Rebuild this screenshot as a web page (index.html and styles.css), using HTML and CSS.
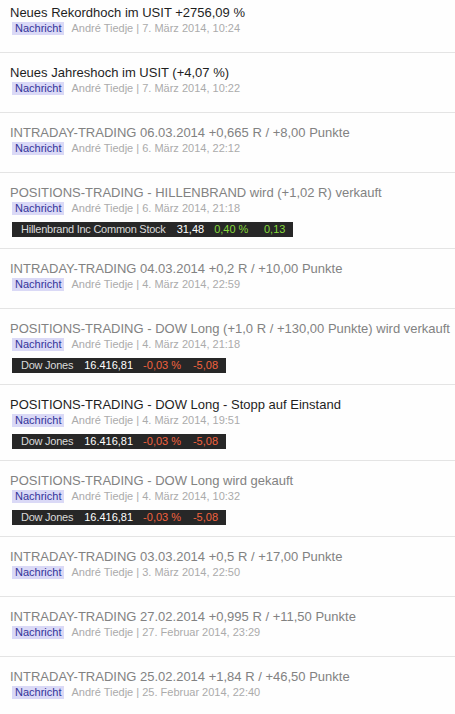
FILE: index.html
```html
<!DOCTYPE html>
<html lang="de">
<head>
<meta charset="utf-8">
<title>Nachrichten</title>
<link rel="stylesheet" href="styles.css">
</head>
<body>
<ul class="news">
  <li class="item first">
    <a class="title dark" href="#">Neues Rekordhoch im USIT +2756,09 %</a>
    <div class="meta"><span class="tag">Nachricht</span><span class="by">André Tiedje | 7. März 2014, 10:24</span></div>
  </li>
  <li class="item">
    <a class="title dark" href="#">Neues Jahreshoch im USIT (+4,07 %)</a>
    <div class="meta"><span class="tag">Nachricht</span><span class="by">André Tiedje | 7. März 2014, 10:22</span></div>
  </li>
  <li class="item">
    <a class="title" href="#">INTRADAY-TRADING 06.03.2014 +0,665 R / +8,00 Punkte</a>
    <div class="meta"><span class="tag">Nachricht</span><span class="by">André Tiedje | 6. März 2014, 22:12</span></div>
  </li>
  <li class="item">
    <a class="title" href="#">POSITIONS-TRADING - HILLENBRAND wird (+1,02 R) verkauft</a>
    <div class="meta"><span class="tag">Nachricht</span><span class="by">André Tiedje | 6. März 2014, 21:18</span></div>
    <div class="ticker"><span class="name">Hillenbrand Inc Common Stock</span><span class="price">31,48</span><span class="pct up">0,40 %</span><span class="chg up">0,13</span></div>
  </li>
  <li class="item">
    <a class="title" href="#">INTRADAY-TRADING 04.03.2014 +0,2 R / +10,00 Punkte</a>
    <div class="meta"><span class="tag">Nachricht</span><span class="by">André Tiedje | 4. März 2014, 22:59</span></div>
  </li>
  <li class="item">
    <a class="title" href="#">POSITIONS-TRADING - DOW Long (+1,0 R / +130,00 Punkte) wird verkauft</a>
    <div class="meta"><span class="tag">Nachricht</span><span class="by">André Tiedje | 4. März 2014, 21:18</span></div>
    <div class="ticker"><span class="name">Dow Jones</span><span class="price">16.416,81</span><span class="pct down">-0,03 %</span><span class="chg down">-5,08</span></div>
  </li>
  <li class="item">
    <a class="title dark" href="#">POSITIONS-TRADING - DOW Long - Stopp auf Einstand</a>
    <div class="meta"><span class="tag">Nachricht</span><span class="by">André Tiedje | 4. März 2014, 19:51</span></div>
    <div class="ticker"><span class="name">Dow Jones</span><span class="price">16.416,81</span><span class="pct down">-0,03 %</span><span class="chg down">-5,08</span></div>
  </li>
  <li class="item">
    <a class="title" href="#">POSITIONS-TRADING - DOW Long wird gekauft</a>
    <div class="meta"><span class="tag">Nachricht</span><span class="by">André Tiedje | 4. März 2014, 10:32</span></div>
    <div class="ticker"><span class="name">Dow Jones</span><span class="price">16.416,81</span><span class="pct down">-0,03 %</span><span class="chg down">-5,08</span></div>
  </li>
  <li class="item">
    <a class="title" href="#">INTRADAY-TRADING 03.03.2014 +0,5 R / +17,00 Punkte</a>
    <div class="meta"><span class="tag">Nachricht</span><span class="by">André Tiedje | 3. März 2014, 22:50</span></div>
  </li>
  <li class="item">
    <a class="title" href="#">INTRADAY-TRADING 27.02.2014 +0,995 R / +11,50 Punkte</a>
    <div class="meta"><span class="tag">Nachricht</span><span class="by">André Tiedje | 27. Februar 2014, 23:29</span></div>
  </li>
  <li class="item">
    <a class="title" href="#">INTRADAY-TRADING 25.02.2014 +1,84 R / +46,50 Punkte</a>
    <div class="meta"><span class="tag">Nachricht</span><span class="by">André Tiedje | 25. Februar 2014, 22:40</span></div>
  </li>
</ul>
</body>
</html>
```
FILE: styles.css
```css
html, body {
  margin: 0;
  padding: 0;
  background: #fefefe;
}
body {
  font-family: "Liberation Sans", Arial, sans-serif;
  overflow: hidden;
}
.news {
  list-style: none;
  margin: 0;
  padding: 0;
}
.item {
  padding: 11px 8px 10px 10px;
  border-bottom: 1px solid #e4e4e4;
  display: flex;
  flex-direction: column;
  align-items: flex-start;
}
.item.first {
  padding-top: 4px;
}
.title {
  font-size: 13px;
  line-height: 18px;
  color: #828282;
  text-decoration: none;
  white-space: nowrap;
}
.title.dark {
  color: #1e1e1e;
}
.meta {
  display: flex;
  align-items: center;
  font-size: 11px;
  line-height: 13px;
  margin-bottom: 7px;
}
.tag {
  background: #dad9f6;
  color: #34349a;
  padding: 0 3px;
  margin-left: 2px;
}
.by {
  color: #ababab;
  margin-left: 7px;
}
.ticker {
  display: flex;
  background: #272727;
  font-size: 11px;
  line-height: 15px;
  padding: 0 8px 0 9px;
  margin: 0 0 1px 2px;
}
.name {
  color: #dadada;
  letter-spacing: -0.25px;
}
.price {
  color: #ffffff;
  margin-left: 11px;
}
.pct {
  margin-left: 10px;
}
.chg {
  min-width: 37px;
  text-align: right;
}
.up {
  color: #84d83a;
}
.down {
  color: #f2623e;
}
```
